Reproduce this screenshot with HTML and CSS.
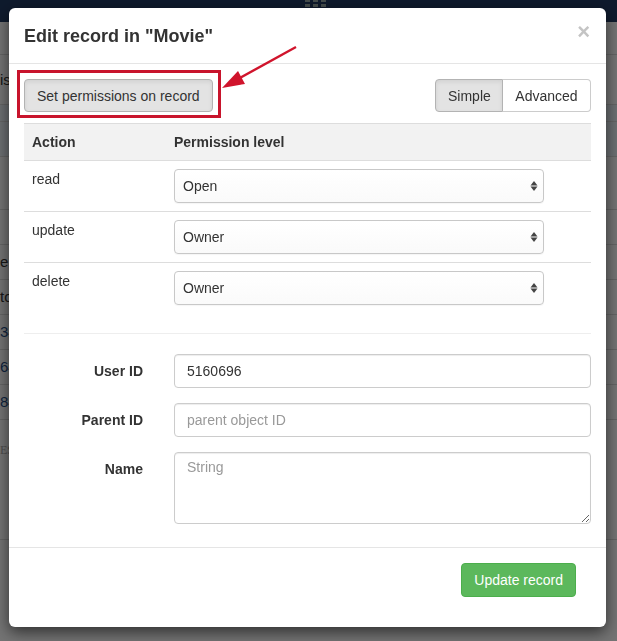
FILE: index.html
```html
<!DOCTYPE html>
<html>
<head>
<meta charset="utf-8">
<link rel="stylesheet" href="styles.css">
</head>
<body>
<div class="page">
  <div class="navbar">
    <svg class="nav-icon" width="22" height="8" viewBox="0 0 22 8"><rect x="0" y="0" width="5" height="2" fill="#9aa"/><rect x="8" y="0" width="5" height="2" fill="#9aa"/><rect x="16" y="0" width="5" height="2" fill="#9aa"/><rect x="0" y="4" width="5" height="3" fill="#9aa"/><rect x="8" y="4" width="5" height="3" fill="#9aa"/><rect x="16" y="4" width="5" height="3" fill="#9aa"/></svg>
  </div>
  <div class="bg-rows">
    <div class="bg-row h33"></div>
    <div class="bg-row h50 txt">is</div>
    <div class="bg-row h17 blue"></div>
    <div class="bg-row h35 blue"></div>
    <div class="bg-row h53"></div>
    <div class="bg-row h35"></div>
    <div class="bg-row h35 txt">e</div>
    <div class="bg-row h35 txt">to</div>
    <div class="bg-row h35 link">34</div>
    <div class="bg-row h35 link">64</div>
    <div class="bg-row h35 link">84</div>
    <div class="bg-row h120 serif">ES</div>
  </div>
</div>

<div class="overlay">
  <div class="modal">
    <svg class="arrow" width="100" height="60" viewBox="210 40 100 60">
      <line x1="296" y1="47" x2="238" y2="79" stroke="#d0142c" stroke-width="2.4"/>
      <polygon points="222,88 245,84 238,71" fill="#d0142c"/>
    </svg>
    <div class="modal-header">
      <h4 class="modal-title">Edit record in "Movie"</h4>
      <span class="close">×</span>
    </div>
    <div class="modal-body">
      <div class="toolbar">
        <span class="annot"><button class="btn btn-active">Set permissions on record</button></span>
        <div class="btn-group">
          <button class="btn btn-active grp-left">Simple</button>
          <button class="btn grp-right">Advanced</button>
        </div>
      </div>
      <table class="perm-table">
        <thead>
          <tr><th class="col-action">Action</th><th>Permission level</th></tr>
        </thead>
        <tbody>
          <tr><td>read</td><td><div class="select"><span>Open</span><svg width="8" height="12" viewBox="0 0 8 12"><polygon points="4,1 7.5,5.5 0.5,5.5" fill="#444"/><polygon points="4,11 7.5,6.5 0.5,6.5" fill="#444"/></svg></div></td></tr>
          <tr><td>update</td><td><div class="select"><span>Owner</span><svg width="8" height="12" viewBox="0 0 8 12"><polygon points="4,1 7.5,5.5 0.5,5.5" fill="#444"/><polygon points="4,11 7.5,6.5 0.5,6.5" fill="#444"/></svg></div></td></tr>
          <tr class="last"><td>delete</td><td><div class="select"><span>Owner</span><svg width="8" height="12" viewBox="0 0 8 12"><polygon points="4,1 7.5,5.5 0.5,5.5" fill="#444"/><polygon points="4,11 7.5,6.5 0.5,6.5" fill="#444"/></svg></div></td></tr>
        </tbody>
      </table>
      <hr class="sep">
      <div class="form">
        <label class="lbl">User ID</label>
        <input class="form-control" type="text" value="5160696">
        <label class="lbl">Parent ID</label>
        <input class="form-control" type="text" placeholder="parent object ID">
        <label class="lbl">Name</label>
        <textarea class="form-control ta" placeholder="String"></textarea>
      </div>
    </div>
    <div class="modal-footer">
      <button class="btn btn-success">Update record</button>
    </div>
  </div>
</div>
</body>
</html>
```

FILE: styles.css
```css
* { box-sizing: border-box; }
html, body { margin: 0; padding: 0; }
body {
  font-family: "Liberation Sans", Arial, sans-serif;
  font-size: 14px;
  line-height: 20px;
  color: #333;
  background: #fff;
  width: 617px;
  height: 641px;
  overflow: hidden;
}
.page { width: 617px; height: 641px; }
.navbar {
  height: 22px;
  background: #213a63;
  display: flex;
  justify-content: center;
  align-items: flex-start;
}
.nav-icon { margin-left: 15px; }
.bg-row {
  border-bottom: 1px solid #ddd;
  padding-left: 0;
  font-size: 15px;
  display: flex;
  align-items: center;
}
.bg-row.txt { color: #333; }
.bg-row.link { color: #1f4f8a; }
.bg-row.blue { background: #eef5fb; }
.bg-row.serif { font-family: "Liberation Serif", serif; color: #aaa; font-size: 12px; align-items: flex-start; padding-top: 20px; }
.h17 { height: 17px; }
.h33 { height: 33px; }
.h35 { height: 35px; }
.h50 { height: 50px; }
.h53 { height: 53px; }
.h120 { height: 120px; }

.overlay {
  position: fixed;
  inset: 0;
  background: rgba(0, 0, 0, 0.55);
  padding: 8px 0 0 9px;
}
.modal {
  position: relative;
  width: 597px;
  height: 619px;
  background: #fff;
  border-radius: 6px;
  box-shadow: 0 5px 15px rgba(0, 0, 0, 0.6);
  display: flex;
  flex-direction: column;
}
.arrow {
  position: absolute;
  left: 201px;
  top: 32px;
  overflow: visible;
}
.modal-header {
  padding: 15px;
  border-bottom: 1px solid #e5e5e5;
  display: flex;
  justify-content: space-between;
  align-items: center;
  height: 56px;
}
.modal-title {
  margin: 0;
  font-size: 18px;
  font-weight: bold;
  line-height: 26px;
  color: #333;
}
.close {
  font-size: 22px;
  font-weight: bold;
  color: #c4c4c4;
  line-height: 20px;
  margin-top: -8px;
  margin-right: 1px;
}
.modal-body { padding: 15px 15px 0 15px; }
.toolbar {
  display: flex;
  justify-content: space-between;
  align-items: center;
  margin-bottom: 11px;
}
.annot { position: relative; display: inline-block; }
.annot::after {
  content: "";
  position: absolute;
  left: -7px;
  right: -8px;
  top: -9px;
  bottom: -6px;
  border: 3px solid #c8142c;
}
.btn {
  font-family: "Liberation Sans", Arial, sans-serif;
  font-size: 14px;
  line-height: 20px;
  padding: 6px 12px;
  height: 33px;
  border: 1px solid #ccc;
  border-radius: 4px;
  background: #fff;
  color: #333;
  margin: 0;
}
.btn-active {
  background: #e3e3e3;
  border-color: #b3b3b3;
  box-shadow: inset 0 2px 4px rgba(0, 0, 0, 0.08);
}
.btn-group { display: flex; }
.grp-left { border-radius: 4px 0 0 4px; width: 68px; }
.grp-right { border-radius: 0 4px 4px 0; border-left: none; width: 88px; }
.perm-table {
  width: 100%;
  border-collapse: collapse;
}
.perm-table th {
  text-align: left;
  background: #f2f2f2;
  padding: 8px;
  border-top: 1px solid #ddd;
  border-bottom: 1px solid #ddd;
  font-weight: bold;
  height: 37px;
}
.perm-table .col-action { width: 142px; }
.perm-table td {
  padding: 8px;
  vertical-align: top;
  border-bottom: 1px solid #ddd;
}
.perm-table tr.last td { border-bottom: none; }
.select {
  width: 370px;
  height: 34px;
  border: 1px solid #c8c8c8;
  border-radius: 4px;
  background: linear-gradient(#fff, #fafafa);
  display: flex;
  align-items: center;
  justify-content: space-between;
  padding: 0 5px 0 8px;
  font-size: 14px;
  box-shadow: 0 1px 1px rgba(0, 0, 0, 0.04);
}
.sep {
  border: none;
  border-top: 1px solid #eee;
  margin: 20px 0 20px 0;
}
.form {
  display: grid;
  grid-template-columns: 119px 1fr;
  column-gap: 31px;
  row-gap: 15px;
}
.lbl {
  text-align: right;
  font-weight: bold;
  padding-top: 7px;
}
.form-control {
  font-family: "Liberation Sans", Arial, sans-serif;
  font-size: 14px;
  color: #333;
  height: 34px;
  padding: 6px 12px;
  border: 1px solid #ccc;
  border-radius: 4px;
  box-shadow: inset 0 1px 1px rgba(0, 0, 0, 0.075);
  width: 100%;
  margin: 0;
}
.form-control::placeholder { color: #999; }
.ta {
  height: 72px;
  resize: vertical;
  display: block;
}
.modal-footer {
  margin-top: 23px;
  border-top: 1px solid #e5e5e5;
  padding: 15px 30px 15px 15px;
  display: flex;
  justify-content: flex-end;
}
.btn-success {
  background: #5cb85c;
  border-color: #4cae4c;
  color: #fff;
  height: 34px;
}
```
